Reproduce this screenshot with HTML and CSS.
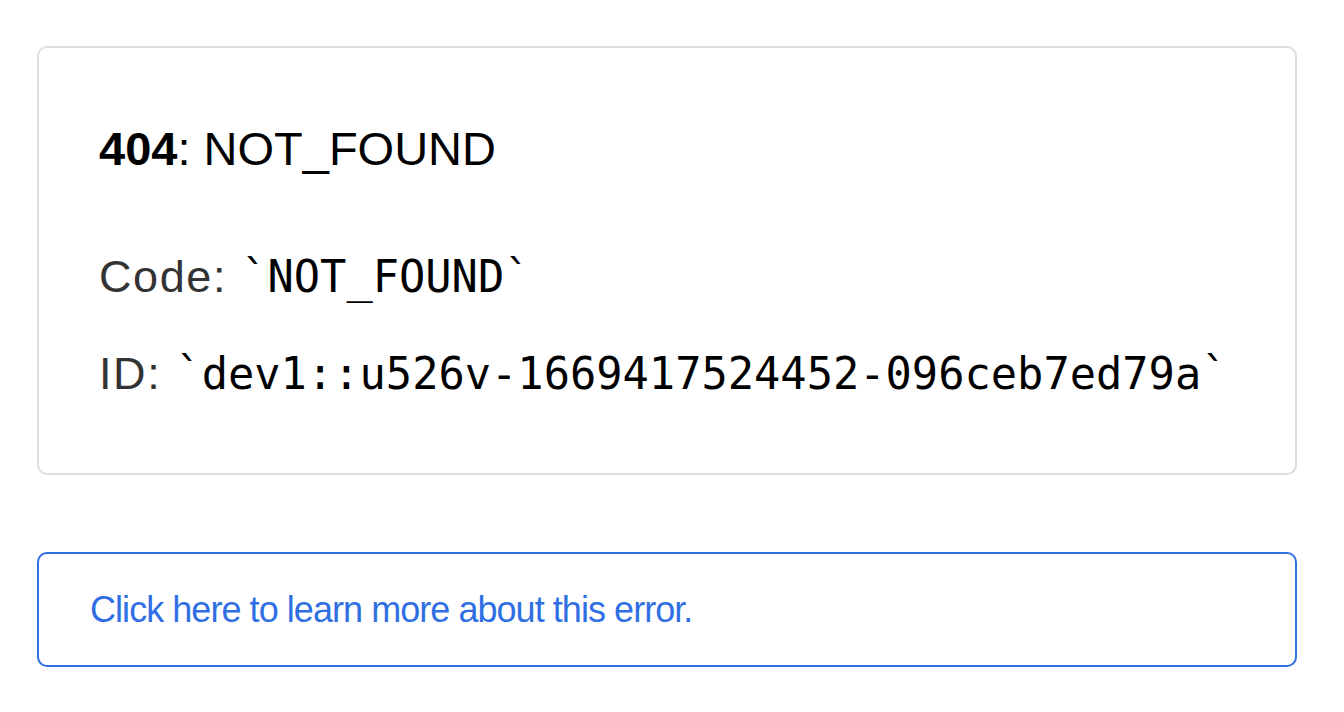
FILE: index.html
```html
<!DOCTYPE html>
<html lang="en">
<head>
<meta charset="utf-8">
<title>404: NOT_FOUND</title>
<link rel="stylesheet" href="styles.css">
</head>
<body>
<main class="page">
  <section class="error-box">
    <h1 class="error-title"><strong>404</strong>: NOT_FOUND</h1>
    <p class="error-line error-code">Code: <code class="mono">`NOT_FOUND`</code></p>
    <p class="error-line">ID: <code class="mono">`dev1::u526v-1669417524452-096ceb7ed79a`</code></p>
  </section>
  <a class="help-box" href="#">Click here to learn more about this error.</a>
</main>
</body>
</html>
```
FILE: styles.css
```css
html, body {
  margin: 0;
  padding: 0;
  background: #ffffff;
}
body {
  font-family: "Liberation Sans", Arial, Helvetica, sans-serif;
}
.page {
  display: flex;
  flex-direction: column;
  padding: 46px 47px 0 37px;
  gap: 77px;
}
.error-box {
  border: 2px solid #dedede;
  border-radius: 10px;
  padding: 76px 58px 74px 60px;
}
.error-title {
  margin: 0;
  font-size: 47px;
  line-height: 50px;
  font-weight: normal;
  color: #000;
}
.error-title strong {
  font-weight: bold;
}
.error-line {
  margin: 0;
  font-size: 45px;
  line-height: 50px;
  letter-spacing: 1.6px;
  color: #333333;
}
.error-code {
  margin-top: 78px;
  margin-bottom: 47px;
}
.mono {
  font-family: "DejaVu Sans Mono", monospace;
  font-size: 43.7px;
  line-height: 44px;
  letter-spacing: 0;
  color: #000;
}
.help-box {
  display: block;
  border: 2px solid #2f6fe3;
  border-radius: 10px;
  padding: 34px 51px 33px;
  font-size: 36px;
  line-height: 44px;
  letter-spacing: -0.95px;
  color: #2f6fe3;
  text-decoration: none;
}
```
